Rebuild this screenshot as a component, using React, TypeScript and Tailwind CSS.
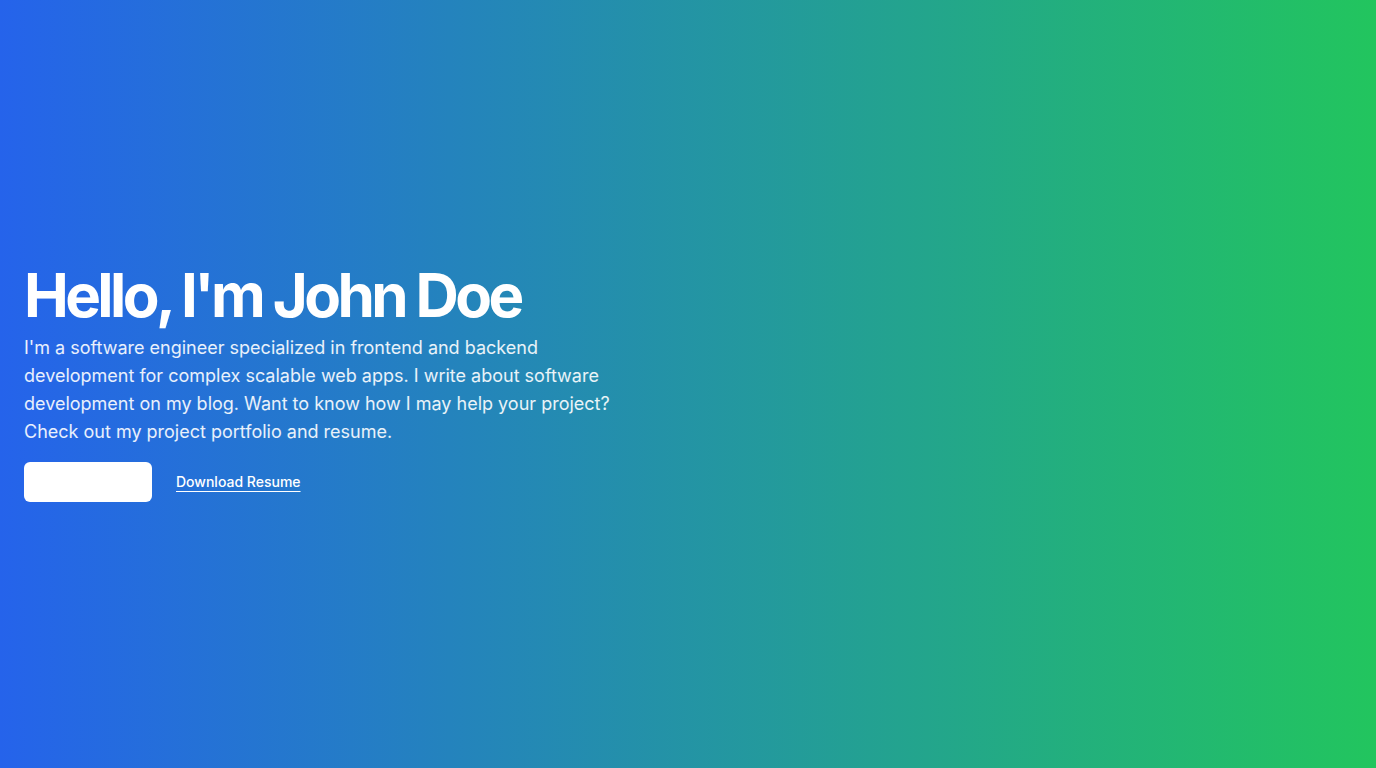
import React from 'react';

const App = () => {
  return (
    <div
      className="min-h-screen w-full bg-linear-to-r/srgb from-[#2563eb] to-[#22c55e] flex items-center"
      style={{ fontFamily: 'Inter, "Noto Sans", sans-serif' }}
    >
      <div className="px-6 w-full">
        <div className="flex flex-col pb-0.5">
          <h1 className="text-6xl font-bold tracking-[-0.06em] leading-none text-white">
            Hello, I'm John Doe
          </h1>
          <p className="mt-[9px] max-w-[600px] text-lg leading-7 text-white/90">
            I'm a software engineer specialized in frontend and backend development for complex
            scalable web apps. I write about software development on my blog. Want to know how I
            may help your project? Check out my project portfolio and resume.
          </p>
          <div className="mt-4 flex items-center gap-6">
            <a
              href="#"
              className="inline-flex h-10 w-32 items-center justify-center rounded-md bg-white text-sm font-medium text-white"
            >
              Contact Me
            </a>
            <a
              href="#"
              className="text-sm font-medium text-white underline underline-offset-4"
            >
              Download Resume
            </a>
          </div>
        </div>
      </div>
    </div>
  );
};

export default App;
